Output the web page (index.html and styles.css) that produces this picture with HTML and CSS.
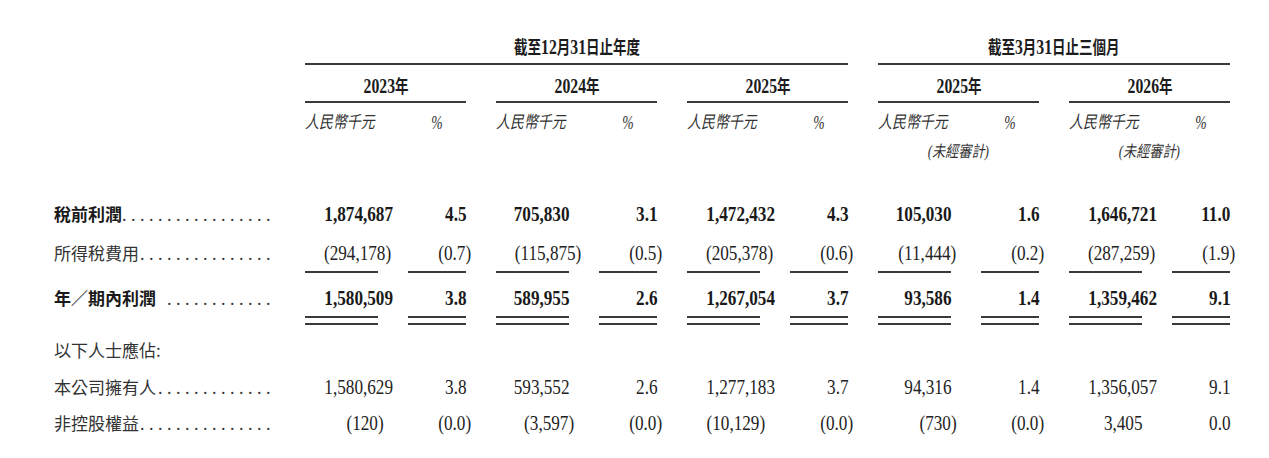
FILE: index.html
```html
<!DOCTYPE html>
<html lang="zh-Hant">
<head>
<meta charset="utf-8">
<title>損益摘要</title>
<link rel="stylesheet" href="styles.css">
</head>
<body>
<div class="tbl">
  <div class="row r-h1">
    <div></div>
    <div class="hd sp6"><span class="sq">截至<span class="d">12</span>月<span class="d">31</span>日止年度</span></div>
    <div class="hd sp4"><span class="sq">截至<span class="d">3</span>月<span class="d">31</span>日止三個月</span></div>
  </div>
  <div class="row r-h2">
    <div></div>
    <div class="hd sp2"><span class="sq"><span class="d">2023</span>年</span></div>
    <div class="hd sp2"><span class="sq"><span class="d">2024</span>年</span></div>
    <div class="hd sp2"><span class="sq"><span class="d">2025</span>年</span></div>
    <div class="hd sp2"><span class="sq"><span class="d">2025</span>年</span></div>
    <div class="hd sp2"><span class="sq"><span class="d">2026</span>年</span></div>
  </div>
  <div class="row r-u">
    <div></div>
    <div class="unit"><span>人民幣千元</span></div><div class="pc"><span>%</span></div>
    <div class="unit"><span>人民幣千元</span></div><div class="pc"><span>%</span></div>
    <div class="unit"><span>人民幣千元</span></div><div class="pc"><span>%</span></div>
    <div class="unit"><span>人民幣千元</span></div><div class="pc"><span>%</span></div>
    <div class="unit"><span>人民幣千元</span></div><div class="pc"><span>%</span></div>
  </div>
  <div class="row r-a">
    <div></div>
    <div class="sp6"></div>
    <div class="aud sp2"><span>(未經審計)</span></div>
    <div class="aud sp2"><span>(未經審計)</span></div>
  </div>

  <div class="row r-1">
    <div class="lbl b"><span>稅前利潤</span><span class="dots">.................</span></div>
    <div class="n b"><span>1,874,687</span></div><div class="n b"><span>4.5</span></div>
    <div class="n b"><span>705,830</span></div><div class="n b"><span>3.1</span></div>
    <div class="n b"><span>1,472,432</span></div><div class="n b"><span>4.3</span></div>
    <div class="n b"><span>105,030</span></div><div class="n b"><span>1.6</span></div>
    <div class="n b"><span>1,646,721</span></div><div class="n b"><span>11.0</span></div>
  </div>
  <div class="row r-2">
    <div class="lbl"><span>所得稅費用</span><span class="dots">...............</span></div>
    <div class="n u"><span class="ng">(294,178)</span></div><div class="n u"><span class="ng">(0.7)</span></div>
    <div class="n u"><span class="ng">(115,875)</span></div><div class="n u"><span class="ng">(0.5)</span></div>
    <div class="n u"><span class="ng">(205,378)</span></div><div class="n u"><span class="ng">(0.6)</span></div>
    <div class="n u"><span class="ng">(11,444)</span></div><div class="n u"><span class="ng">(0.2)</span></div>
    <div class="n u"><span class="ng">(287,259)</span></div><div class="n u"><span class="ng">(1.9)</span></div>
  </div>
  <div class="row r-3">
    <div class="lbl b"><span>年／期內利潤</span><span class="dots">............</span></div>
    <div class="n b dbl"><div class="in"><span>1,580,509</span></div></div><div class="n b dbl"><div class="in"><span>3.8</span></div></div>
    <div class="n b dbl"><div class="in"><span>589,955</span></div></div><div class="n b dbl"><div class="in"><span>2.6</span></div></div>
    <div class="n b dbl"><div class="in"><span>1,267,054</span></div></div><div class="n b dbl"><div class="in"><span>3.7</span></div></div>
    <div class="n b dbl"><div class="in"><span>93,586</span></div></div><div class="n b dbl"><div class="in"><span>1.4</span></div></div>
    <div class="n b dbl"><div class="in"><span>1,359,462</span></div></div><div class="n b dbl"><div class="in"><span>9.1</span></div></div>
  </div>
  <div class="row r-4">
    <div class="lbl full"><span>以下人士應佔:</span></div>
  </div>
  <div class="row r-5">
    <div class="lbl"><span>本公司擁有人</span><span class="dots">.............</span></div>
    <div class="n"><span>1,580,629</span></div><div class="n"><span>3.8</span></div>
    <div class="n"><span>593,552</span></div><div class="n"><span>2.6</span></div>
    <div class="n"><span>1,277,183</span></div><div class="n"><span>3.7</span></div>
    <div class="n"><span>94,316</span></div><div class="n"><span>1.4</span></div>
    <div class="n"><span>1,356,057</span></div><div class="n"><span>9.1</span></div>
  </div>
  <div class="row r-6">
    <div class="lbl"><span>非控股權益</span><span class="dots">...............</span></div>
    <div class="n"><span class="ng">(120)</span></div><div class="n"><span class="ng">(0.0)</span></div>
    <div class="n"><span class="ng">(3,597)</span></div><div class="n"><span class="ng">(0.0)</span></div>
    <div class="n"><span class="ng">(10,129)</span></div><div class="n"><span class="ng">(0.0)</span></div>
    <div class="n"><span class="ng">(730)</span></div><div class="n"><span class="ng">(0.0)</span></div>
    <div class="n"><span>3,405</span></div><div class="n"><span>0.0</span></div>
  </div>
</div>
</body>
</html>
```
FILE: styles.css
```css
* { box-sizing: border-box; margin: 0; padding: 0; }
html, body { background: #ffffff; }
body {
  margin: 0;
  overflow: hidden;
  color: #1c1c1c;
  font-family: "Liberation Serif", "Noto Sans CJK TC", serif;
}

.tbl {
  display: grid;
  grid-template-columns: 221px repeat(5, 73px 58px);
  column-gap: 30px;
  padding: 30px 0 0 54px;
}
.row { display: contents; }
.sp6 { grid-column: span 6; }
.sp4 { grid-column: span 4; }
.sp2 { grid-column: span 2; }
.full { grid-column: 1 / -1; }

/* header */
.hd {
  text-align: center;
  white-space: nowrap;
  font-family: "Noto Sans CJK TC", sans-serif;
  font-weight: 700;
  font-size: 18px;
  border-bottom: 2px solid #3a3a3a;
}
.hd .d { font-family: "Liberation Serif", serif; font-size: 21px; }
.sq { display: inline-block; transform: scaleX(.75); }

.unit {
  white-space: nowrap;
  font-family: "Liberation Serif", "Noto Sans CJK TC", serif;
  font-style: italic;
  font-size: 17px;
  color: #333;
}
.unit span { display: inline-block; transform: scaleX(.82); transform-origin: left center; }
.pc {
  text-align: center;
  font-style: italic;
  font-size: 19px;
  color: #333;
}
.pc span { display: inline-block; transform: scaleX(.72); }
.aud {
  text-align: center;
  white-space: nowrap;
  font-style: italic;
  font-size: 16px;
  color: #333;
}
.aud span { display: inline-block; transform: scaleX(.82); }

/* row metrics */
.r-h1 > div { height: 35px; line-height: 33px; }
.r-h2 > div { height: 38px; padding-top: 4px; line-height: 32px; }
.r-u > div { height: 40px; line-height: 40px; }
.r-a > div { height: 18px; line-height: 18px; }
.r-1 > div { height: 71px; padding-top: 34px; line-height: 37px; }
.r-2 > div { height: 41px; padding-top: 3px; line-height: 36px; }
.r-3 > div { height: 52px; padding-top: 7px; line-height: 36px; }
.r-4 > div { height: 43px; padding-top: 7px; line-height: 36px; }
.r-5 > div { height: 38px; line-height: 38px; }
.r-6 > div { height: 34px; line-height: 34px; }

/* labels with dot leaders */
.lbl {
  display: flex;
  align-items: baseline;
  white-space: nowrap;
  font-family: "Noto Sans CJK TC", sans-serif;
  font-size: 17px;
  color: #333;
}
.lbl.b { font-weight: 700; color: #1a1a1a; }
.dots {
  flex: 1;
  text-align: right;
  font-family: "Liberation Serif", serif;
  font-weight: 400;
  font-size: 18px;
  letter-spacing: 4.5px;
  color: #333;
}

/* numbers */
.n {
  text-align: right;
  white-space: nowrap;
  font-size: 22px;
  color: #222;
}
.n.b { font-weight: 700; color: #1a1a1a; }
.n span { display: inline-block; transform: scaleX(.78); transform-origin: right center; }
.n .ng { margin-right: -5.5px; }
.u { border-bottom: 2px solid #3a3a3a; }
.dbl { border-bottom: 2px solid #3a3a3a; padding-bottom: 5px; }
.dbl .in { border-bottom: 2px solid #3a3a3a; }
```
